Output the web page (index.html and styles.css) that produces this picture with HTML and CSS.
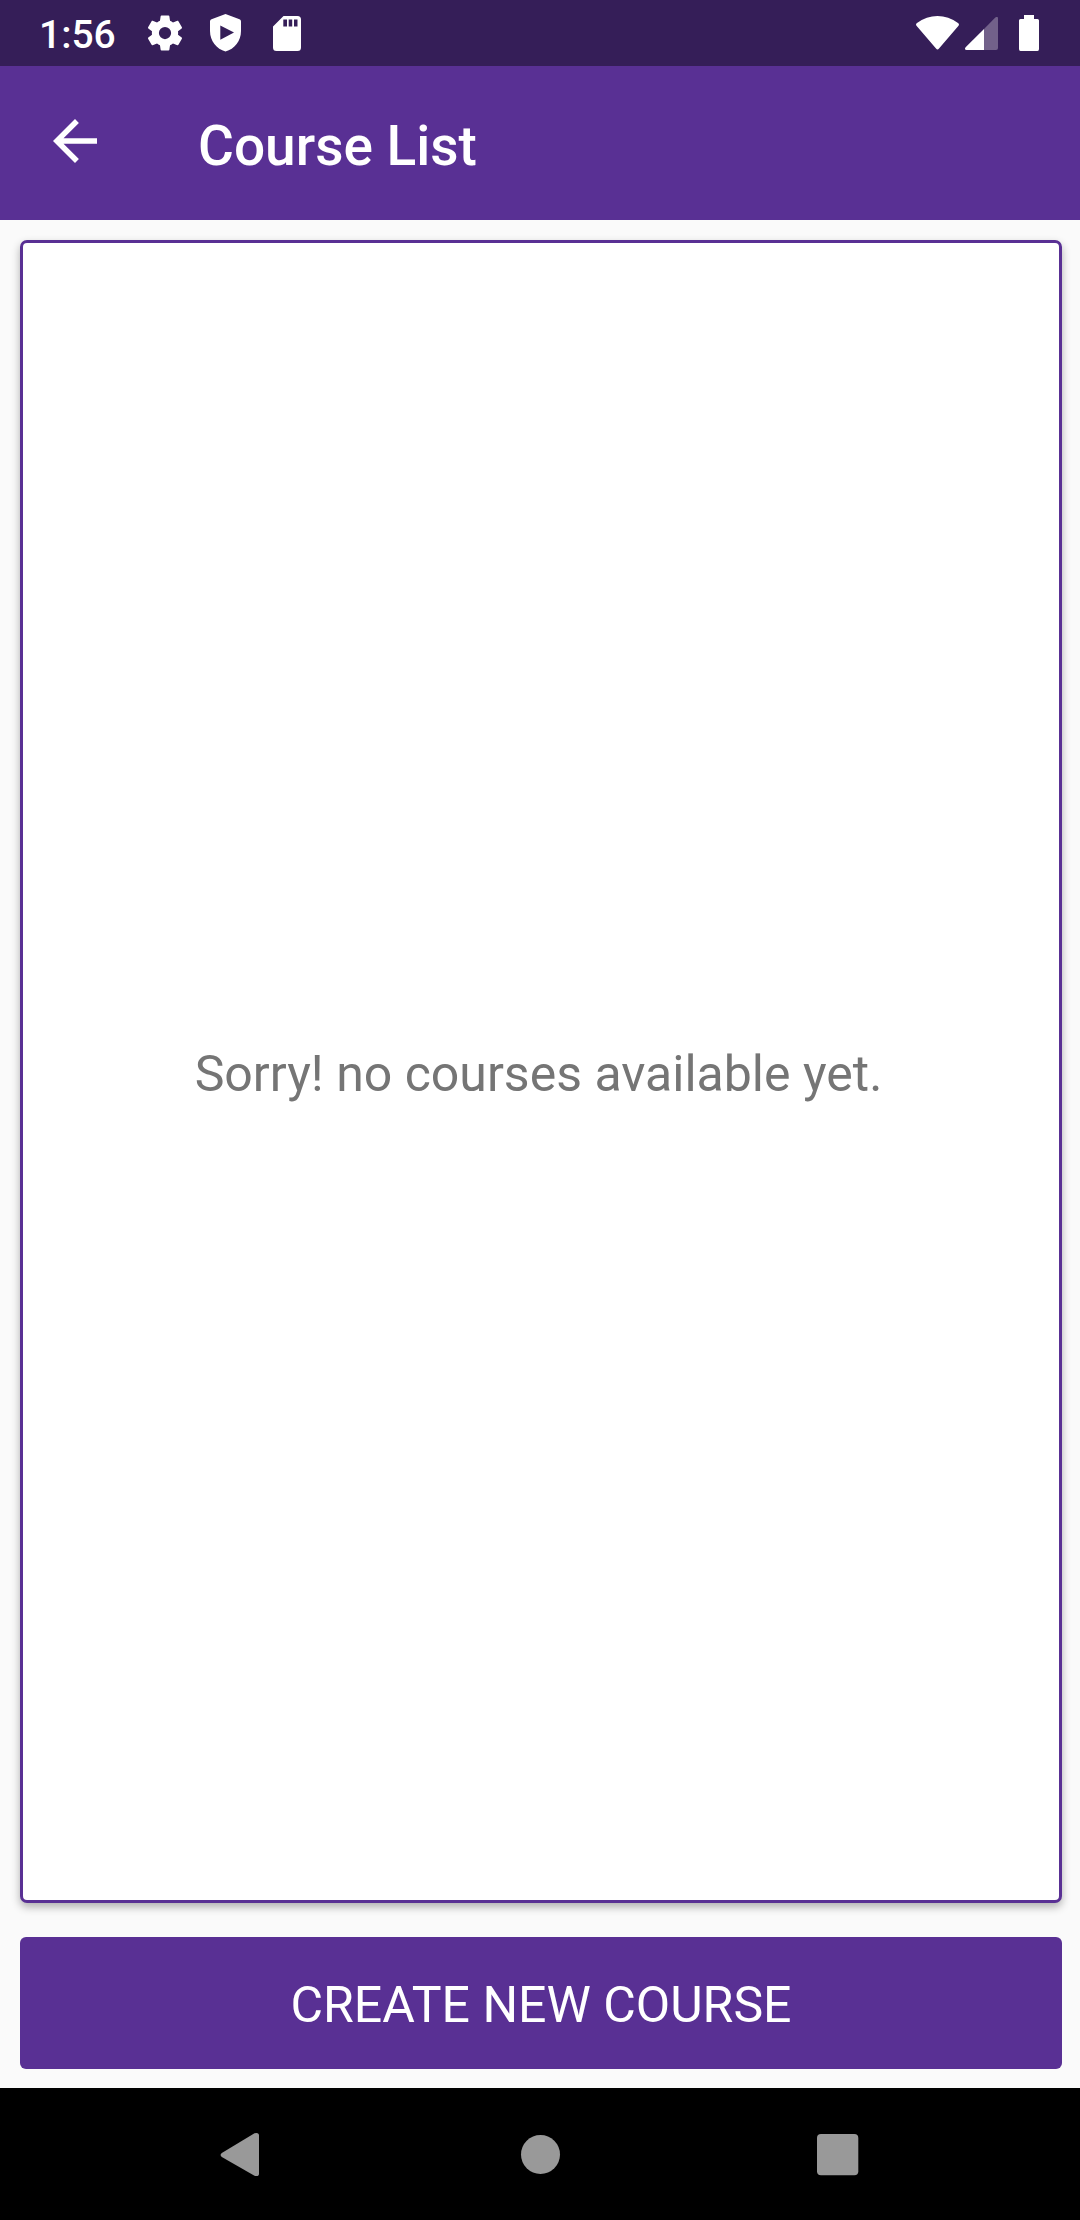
FILE: index.html
```html
<!DOCTYPE html>
<html lang="en">
<head>
<meta charset="utf-8">
<title>Course List</title>
<link rel="stylesheet" href="styles.css">
</head>
<body>
<div class="screen">
  <div class="status-bar">
    <div class="status-left">
      <span class="clock">1:56</span>
      <svg class="icon" width="42" height="42" viewBox="0 0 24 24"><path d="M19.43 12.98c.04-.32.07-.64.07-.98s-.03-.66-.07-.98l2.11-1.65c.19-.15.24-.42.12-.64l-2-3.46c-.12-.22-.39-.3-.61-.22l-2.49 1c-.52-.4-1.08-.73-1.69-.98l-.38-2.65A.49.49 0 0 0 14 2h-4c-.25 0-.46.18-.49.42l-.38 2.65c-.61.25-1.17.59-1.69.98l-2.49-1c-.23-.09-.49 0-.61.22l-2 3.46c-.13.22-.07.49.12.64l2.11 1.65c-.04.32-.07.65-.07.98s.03.66.07.98l-2.11 1.65c-.19.15-.24.42-.12.64l2 3.46c.12.22.39.3.61.22l2.49-1c.52.4 1.08.73 1.69.98l.38 2.65c.03.24.24.42.49.42h4c.25 0 .46-.18.49-.42l.38-2.65c.61-.25 1.17-.59 1.69-.98l2.49 1c.23.09.49 0 .61-.22l2-3.46c.12-.22.07-.49-.12-.64zM12 15.500a3.500 3.500 0 1 1 0-7 3.500 3.500 0 0 1 0 7z"/></svg>
      <svg class="icon shield" width="32" height="38" viewBox="0 0 32 38"><path fill-rule="evenodd" d="M15.500 0 29.500 5.200Q31 5.800 31 7.500V17C31 27 24.500 35 15.500 37.500 6.500 35 0 27 0 17V7.500Q0 5.800 1.500 5.200ZM10.300 11.500V25.700L24 18.600Z"/></svg>
      <svg class="icon card-icon" width="28" height="36" viewBox="0 0 28 36"><path fill-rule="evenodd" d="M10.500 0H24.500Q28 0 28 3.500V31.500Q28 35 24.500 35H3.500Q0 35 0 31.500V10.500ZM10.300 3.500V10.500H14V3.500ZM15.700 3.500V10.500H19.200V3.500ZM21 3.500V10.500H24.500V3.500Z"/></svg>
    </div>
    <div class="status-right">
      <svg class="icon" width="43" height="35" viewBox="0 0 43 35"><path d="M.7 10Q-.8 8.200 1 7 10.500 0 21.500 0T42 7Q43.800 8.200 42.300 10L23 32.500Q21.500 34.500 20 32.500Z"/></svg>
      <svg class="icon signal" width="33" height="33" viewBox="0 0 33 33"><path opacity=".3" d="M30.300.6Q33-1.500 33 1.800V31Q33 33 31 33H19V11.900Z"/><path d="M19 11.900V33H1.500Q-1 32.500.6 30.300Z"/></svg>
      <svg class="icon battery" width="20" height="36" viewBox="0 0 20 36"><path d="M5 0H15V4H18.500Q20 4 20 5.500V34Q20 36 18.500 36H1.500Q0 36 0 34V5.500Q0 4 1.500 4H5Z"/></svg>
    </div>
  </div>
  <header class="app-bar">
    <svg class="icon back" width="66" height="66" viewBox="0 0 24 24"><path d="M20 11H7.830l5.590-5.590L12 4l-8 8 8 8 1.410-1.410L7.830 13H20z"/></svg>
    <h1 class="title">Course List</h1>
  </header>
  <main class="content">
    <section class="course-card"><p class="empty">Sorry! no courses available yet.</p></section>
    <button class="create" type="button">CREATE NEW COURSE</button>
  </main>
  <nav class="nav-bar">
    <svg class="nav-icon" width="46" height="46" viewBox="0 0 46 46"><path d="M4.800 25.900Q2.400 24 4.800 22.100L37.500 2.200Q42 1 42 4.500V42.500Q42 46 37.500 44.800Z"/></svg>
    <svg class="nav-icon" width="46" height="46" viewBox="0 0 46 46"><circle cx="24.500" cy="23.500" r="19.500"/></svg>
    <svg class="nav-icon" width="46" height="46" viewBox="0 0 46 46"><rect x="2" y="3" width="41.300" height="41.300" rx="4"/></svg>
  </nav>
</div>
</body>
</html>
```
FILE: styles.css
```css
* { box-sizing: border-box; }

body {
  margin: 0;
  font-family: Roboto, "Liberation Sans", sans-serif;
}

.screen {
  display: flex;
  flex-direction: column;
  width: 1080px;
  height: 2220px;
  background: #fafafa;
}

.status-bar {
  display: flex;
  justify-content: space-between;
  height: 66px;
  padding: 0 41px 0 39px;
  background: #351e58;
  color: #fff;
}

.status-left,
.status-right {
  display: flex;
  align-items: center;
}

.clock {
  width: 105px;
  padding-top: 4px;
  font-size: 39px;
  font-weight: 500;
  line-height: 46px;
}

.icon {
  display: block;
  flex: none;
  fill: #fff;
}

.shield { margin-left: 24px; }
.card-icon { margin-left: 31px; margin-top: 1px; }
.signal { margin: 1px 21px 0 6px; }

.app-bar {
  display: flex;
  height: 154px;
  padding: 42px 42px 0;
  background: #593094;
}

.title {
  margin: 5px 0 0 90px;
  color: #fff;
  font-size: 55px;
  font-weight: 500;
  line-height: 66px;
}

.content {
  display: flex;
  flex: 1;
  flex-direction: column;
  gap: 34px;
  padding: 20px 18px 19px 20px;
}

.course-card {
  display: flex;
  flex: 1;
  align-items: center;
  justify-content: center;
  padding: 4px 5px 0 0;
  border: 3px solid #593094;
  border-radius: 7px;
  background: #fff;
  box-shadow: 0 4px 9px rgba(0, 0, 0, 0.3);
}

.empty {
  margin: 0;
  color: #757575;
  font-size: 50px;
  line-height: 58px;
}

.create {
  height: 132px;
  padding: 4px 0 0;
  border: 0;
  border-radius: 6px;
  background: #593094;
  color: #fff;
  font: 400 50px/58px Roboto, "Liberation Sans", sans-serif;
}

.nav-bar {
  display: flex;
  align-items: center;
  justify-content: space-between;
  height: 132px;
  padding: 0 219px 0 217px;
  background: #000;
}

.nav-icon { fill: #999; }
```
